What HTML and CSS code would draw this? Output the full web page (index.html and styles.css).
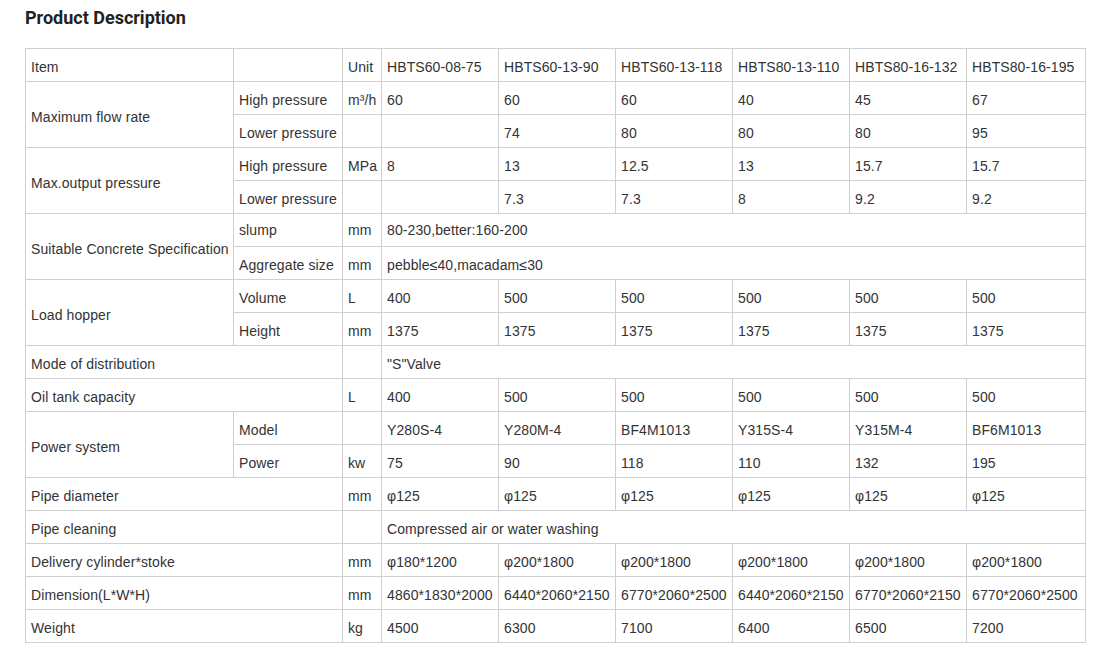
FILE: index.html
```html
<!DOCTYPE html>
<html>
<head>
<meta charset="utf-8">
<link rel="stylesheet" href="styles.css">
</head>
<body>
<div class="page">
<h2 class="title">Product Description</h2>
<table class="spec">
<colgroup>
<col class="c-item"><col class="c-sub"><col class="c-unit">
<col class="c-m"><col class="c-m"><col class="c-m"><col class="c-m"><col class="c-m"><col class="c-last">
</colgroup>
<tbody>
<tr><td>Item</td><td></td><td>Unit</td><td>HBTS60-08-75</td><td>HBTS60-13-90</td><td>HBTS60-13-118</td><td>HBTS80-13-110</td><td>HBTS80-16-132</td><td>HBTS80-16-195</td></tr>
<tr><td rowspan="2">Maximum flow rate</td><td>High pressure</td><td>m³/h</td><td>60</td><td>60</td><td>60</td><td>40</td><td>45</td><td>67</td></tr>
<tr><td>Lower pressure</td><td></td><td></td><td>74</td><td>80</td><td>80</td><td>80</td><td>95</td></tr>
<tr><td rowspan="2">Max.output pressure</td><td>High pressure</td><td>MPa</td><td>8</td><td>13</td><td>12.5</td><td>13</td><td>15.7</td><td>15.7</td></tr>
<tr><td>Lower pressure</td><td></td><td></td><td>7.3</td><td>7.3</td><td>8</td><td>9.2</td><td>9.2</td></tr>
<tr><td rowspan="2">Suitable Concrete Specification</td><td class="hi">slump</td><td class="hi">mm</td><td colspan="6" class="hi">80-230,better:160-200</td></tr>
<tr><td>Aggregate size</td><td>mm</td><td colspan="6">pebble≤40,macadam≤30</td></tr>
<tr><td rowspan="2">Load hopper</td><td>Volume</td><td>L</td><td>400</td><td>500</td><td>500</td><td>500</td><td>500</td><td>500</td></tr>
<tr><td>Height</td><td>mm</td><td>1375</td><td>1375</td><td>1375</td><td>1375</td><td>1375</td><td>1375</td></tr>
<tr><td colspan="2">Mode of distribution</td><td></td><td colspan="6">"S"Valve</td></tr>
<tr><td colspan="2">Oil tank capacity</td><td>L</td><td>400</td><td>500</td><td>500</td><td>500</td><td>500</td><td>500</td></tr>
<tr><td rowspan="2">Power system</td><td>Model</td><td></td><td>Y280S-4</td><td>Y280M-4</td><td>BF4M1013</td><td>Y315S-4</td><td>Y315M-4</td><td>BF6M1013</td></tr>
<tr><td>Power</td><td>kw</td><td>75</td><td>90</td><td>118</td><td>110</td><td>132</td><td>195</td></tr>
<tr><td colspan="2">Pipe diameter</td><td>mm</td><td>φ125</td><td>φ125</td><td>φ125</td><td>φ125</td><td>φ125</td><td>φ125</td></tr>
<tr><td colspan="2">Pipe cleaning</td><td></td><td colspan="6">Compressed air or water washing</td></tr>
<tr><td colspan="2">Delivery cylinder*stoke</td><td>mm</td><td>φ180*1200</td><td>φ200*1800</td><td>φ200*1800</td><td>φ200*1800</td><td>φ200*1800</td><td>φ200*1800</td></tr>
<tr><td colspan="2">Dimension(L*W*H)</td><td>mm</td><td>4860*1830*2000</td><td>6440*2060*2150</td><td>6770*2060*2500</td><td>6440*2060*2150</td><td>6770*2060*2150</td><td>6770*2060*2500</td></tr>
<tr><td colspan="2">Weight</td><td>kg</td><td>4500</td><td>6300</td><td>7100</td><td>6400</td><td>6500</td><td>7200</td></tr>
</tbody>
</table>
</div>
</body>
</html>
```

FILE: styles.css
```css
html, body {
  margin: 0;
  padding: 0;
  background: #ffffff;
}

.page {
  padding: 7px 20px 0 25px;
}

.title {
  margin: 0 0 20px 0;
  font-family: Roboto, "Liberation Sans", sans-serif;
  font-weight: 700;
  font-size: 18px;
  line-height: 21px;
  color: #222222;
}

.spec {
  border-collapse: collapse;
  table-layout: fixed;
  width: 1060px;
  font-family: "Liberation Sans", Arial, sans-serif;
  font-size: 14px;
  letter-spacing: 0.1px;
  color: #333333;
}

.c-item { width: 208px; }
.c-sub { width: 109px; }
.c-unit { width: 39px; }
.c-m { width: 117px; }
.c-last { width: 119px; }

.spec tr {
  height: 33px;
}

.spec td {
  border: 1px solid #cfcfcf;
  padding: 4px 5px 0 5px;
  height: 28px;
  line-height: 16px;
  vertical-align: middle;
  white-space: nowrap;
  overflow: hidden;
  box-sizing: border-box;
}

.spec td.hi {
  padding-top: 0;
}
```
